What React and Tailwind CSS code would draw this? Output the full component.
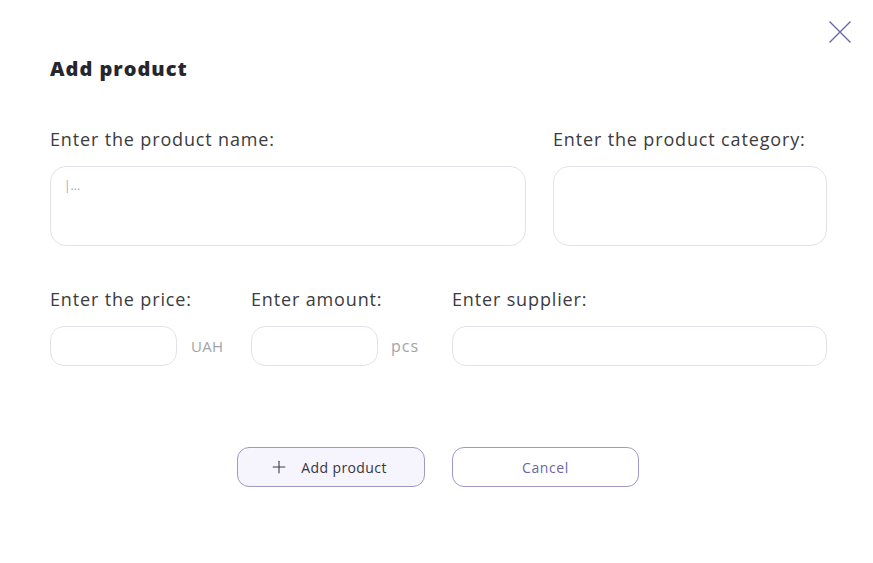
import { Plus } from 'lucide-react'

const font = { fontFamily: '"Open Sans", "Liberation Sans", sans-serif' }

function Field({ label, children, className = '' }) {
  return (
    <div className={`flex flex-col ${className}`}>
      <label className="text-[18px] leading-[27px] tracking-[0.85px] text-[#3b3b40] mb-[13px]">{label}</label>
      {children}
    </div>
  )
}

export default function App() {
  return (
    <div className="w-[873px] h-[563px] bg-white relative overflow-hidden" style={font}>
      <button className="absolute left-[828px] top-[20px] text-[#6c6aa6]">
        <svg width="24" height="24" viewBox="0 0 24 24" fill="none" stroke="currentColor" strokeWidth="1.4">
          <path d="M1.5 1.5 L22.5 22.5 M22.5 1.5 L1.5 22.5" />
        </svg>
      </button>

      <div className="pl-[50px] pt-[55px]">
        <h1 className="text-[20px] leading-[28px] font-extrabold tracking-[1px] text-[#26262e]">Add product</h1>

        {/* Name + category */}
        <div className="flex gap-[27px] mt-[43px]">
          <Field label="Enter the product name:" className="w-[476px]">
            <textarea
              placeholder="|..."
              className="h-[80px] rounded-[16px] border border-[#e3e2ea] px-[13px] py-[10px] text-[12px] resize-none outline-none placeholder:text-[#a8a8b0]"
            />
          </Field>
          <Field label="Enter the product category:" className="w-[274px]">
            <textarea className="h-[80px] rounded-[16px] border border-[#e3e2ea] resize-none outline-none" />
          </Field>
        </div>

        {/* Price, amount, supplier */}
        <div className="flex mt-[40px]">
          <Field label="Enter the price:" className="w-[201px]">
            <div className="flex items-center gap-[14px]">
              <input className="w-[127px] h-[40px] rounded-[14px] border border-[#e3e2ea] outline-none" />
              <span className="text-[15px] tracking-[0.3px] text-[#a3a3a8]">UAH</span>
            </div>
          </Field>
          <Field label="Enter amount:" className="w-[201px]">
            <div className="flex items-center gap-[13px]">
              <input className="w-[127px] h-[40px] rounded-[14px] border border-[#e3e2ea] outline-none" />
              <span className="text-[16px] tracking-[1px] text-[#a3a3a8]">pcs</span>
            </div>
          </Field>
          <Field label="Enter supplier:" className="w-[375px]">
            <input className="w-[375px] h-[40px] rounded-[14px] border border-[#e3e2ea] outline-none" />
          </Field>
        </div>

        {/* Actions */}
        <div className="flex gap-[27px] mt-[81px] pl-[187px]">
          <button className="w-[188px] h-[40px] rounded-[12px] border border-[#9d99c9] bg-[#f6f4fc] flex items-center justify-center gap-[12px] pr-[6px] text-[14px] tracking-[0.4px] text-[#36363f]">
            <Plus size={20} strokeWidth={1.3} className="text-[#3a3a44]" />
            Add product
          </button>
          <button className="w-[187px] h-[40px] rounded-[12px] border border-[#9d99c9] bg-white text-[14px] tracking-[0.6px] text-[#6a68a0]">
            Cancel
          </button>
        </div>
      </div>
    </div>
  )
}
